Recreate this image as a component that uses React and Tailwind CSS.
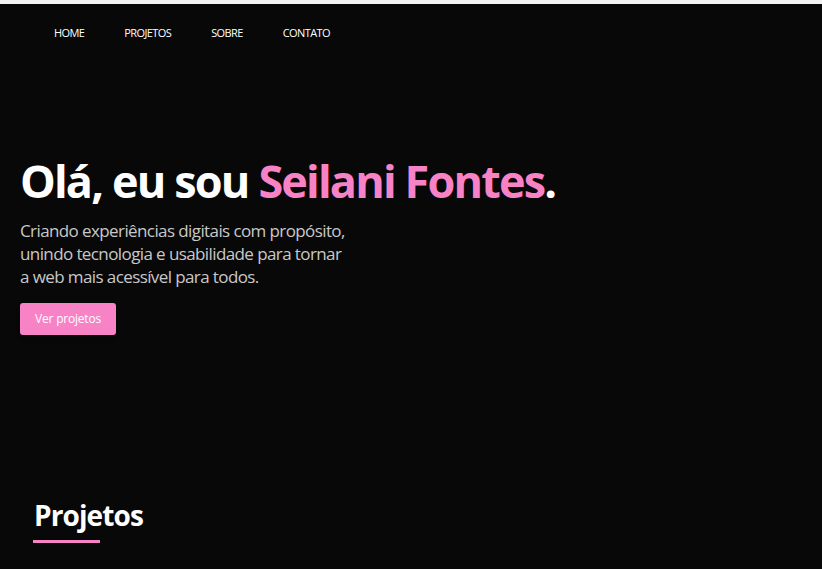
import React from "react";

const links = ["HOME", "PROJETOS", "SOBRE", "CONTATO"];

export default function App() {
  return (
    <div className="min-h-screen bg-[#080808] text-white font-['Open_Sans',sans-serif] overflow-hidden">
      <div className="h-[4px] bg-[#f2f2f2]" />

      {/* Nav */}
      <nav className="flex gap-10 pl-[54px] pt-[22px] h-[60px]">
        {links.map((l) => (
          <a key={l} href="#" className="text-[11px] leading-[14px] tracking-[-0.6px] text-white">
            {l}
          </a>
        ))}
      </nav>

      {/* Hero */}
      <section className="pl-5 pt-[89px] h-[425px]">
        <h1 className="text-[45px] leading-[56px] font-bold tracking-[-1.85px]">
          Olá, eu sou <span className="text-[#f882c6]">Seilani Fontes</span>.
        </h1>
        <p className="mt-[10px] w-[332px] text-[17px] leading-[23px] text-[#c8c8c8] tracking-[-0.6px]">
          Criando experiências digitais com propósito, unindo tecnologia e usabilidade para tornar a web mais acessível para todos.
        </p>
        <button className="mt-[15px] w-[96px] h-[32px] rounded-[3px] bg-[#f882c6] text-white text-[12px] tracking-[-0.2px] shadow-md">
          Ver projetos
        </button>
      </section>

      {/* Projetos */}
      <section className="pl-[34px] pt-[8px]">
        <h2 className="text-[28px] leading-[36px] font-bold tracking-[-0.9px]">Projetos</h2>
        <div className="mt-[7px] -ml-px w-[67px] h-[3px] bg-[#f882c6]" />
      </section>
    </div>
  );
}
